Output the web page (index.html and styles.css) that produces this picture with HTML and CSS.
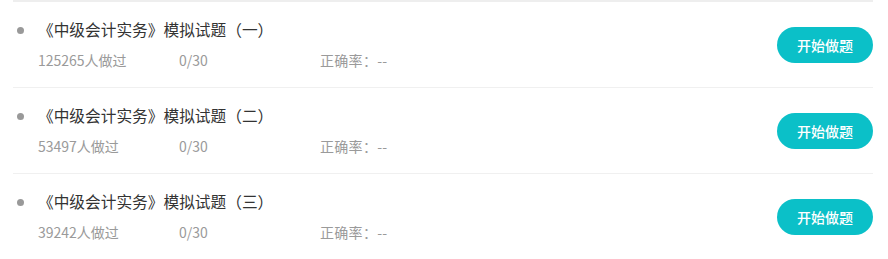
FILE: index.html
```html
<!DOCTYPE html>
<html lang="zh-CN">
<head>
<meta charset="utf-8">
<link rel="stylesheet" href="styles.css">
</head>
<body>
<div class="list">
  <div class="item">
    <div class="info">
      <div class="title"><span class="dot"></span>《中级会计实务》模拟试题（一）</div>
      <div class="meta"><span class="col">125265人做过</span><span class="col">0/30</span><span class="col">正确率：--</span></div>
    </div>
    <button class="btn">开始做题</button>
  </div>
  <div class="item">
    <div class="info">
      <div class="title"><span class="dot"></span>《中级会计实务》模拟试题（二）</div>
      <div class="meta"><span class="col">53497人做过</span><span class="col">0/30</span><span class="col">正确率：--</span></div>
    </div>
    <button class="btn">开始做题</button>
  </div>
  <div class="item">
    <div class="info">
      <div class="title"><span class="dot"></span>《中级会计实务》模拟试题（三）</div>
      <div class="meta"><span class="col">39242人做过</span><span class="col">0/30</span><span class="col">正确率：--</span></div>
    </div>
    <button class="btn">开始做题</button>
  </div>
</div>
</body>
</html>
```

FILE: styles.css
```css
html, body {
  margin: 0;
  padding: 0;
  background: #fff;
  font-family: "Noto Sans CJK SC", "Noto Sans", sans-serif;
}
.list {
  margin-left: 13px;
  width: 860px;
  border-top: 2px solid #eeeeee;
}
.item {
  display: flex;
  align-items: center;
  justify-content: space-between;
  height: 85px;
  border-bottom: 1px solid #f0f0f0;
  box-sizing: content-box;
}
.info {
  display: flex;
  flex-direction: column;
  gap: 10px;
  padding-left: 25px;
}
.title {
  position: relative;
  font-size: 15.7px;
  line-height: 20px;
  color: #333;
}
.dot {
  position: absolute;
  left: -21px;
  top: 7px;
  width: 7px;
  height: 7px;
  border-radius: 50%;
  background: #999;
}
.meta {
  display: flex;
  font-size: 14px;
  line-height: 20px;
  color: #9a9a9a;
}
.col {
  width: 141px;
}
.col:last-child {
  letter-spacing: 0.3px;
}
.btn {
  width: 96px;
  height: 36px;
  border: none;
  border-radius: 18px;
  background: #0bc0c8;
  color: #fff;
  font-family: "Noto Sans CJK SC", sans-serif;
  font-size: 14px;
  font-weight: 500;
  padding: 0;
  cursor: pointer;
}
```
